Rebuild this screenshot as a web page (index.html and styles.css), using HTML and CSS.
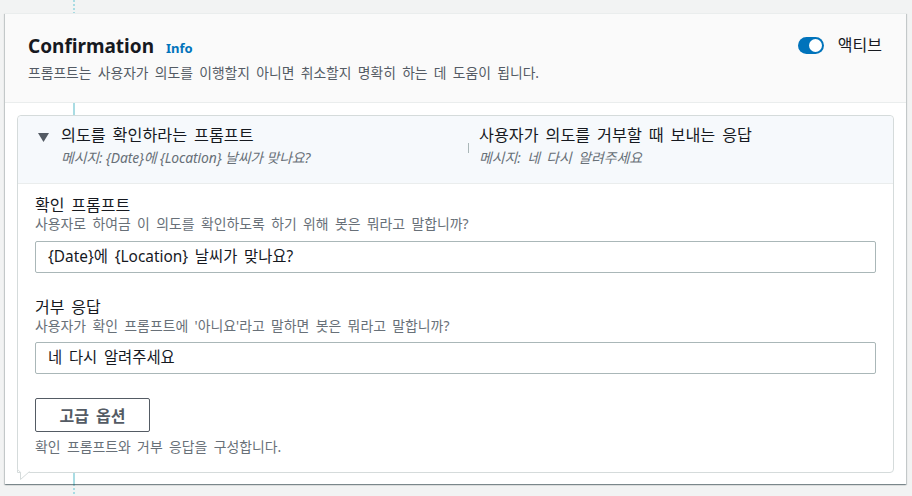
FILE: index.html
```html
<!DOCTYPE html>
<html lang="ko">
<head>
<meta charset="utf-8">
<title>Confirmation</title>
<link rel="stylesheet" href="styles.css">
</head>
<body>
<div class="page">
  <div class="connector"></div>
  <section class="card">
    <header class="card-head">
      <div class="head-text">
        <h2 class="title">Confirmation<a class="info" href="#">Info</a></h2>
        <p class="desc">프롬프트는 사용자가 의도를 이행할지 아니면 취소할지 명확히 하는 데 도움이 됩니다.</p>
      </div>
      <div class="toggle-wrap">
        <span class="toggle"><span class="knob"></span></span>
        <span class="toggle-label">액티브</span>
      </div>
    </header>
    <div class="card-body">
      <div class="line-solid"></div>
      <div class="exp">
        <div class="exp-head">
          <div class="col col-left">
            <svg class="caret" width="11" height="9" viewBox="0 0 11 9"><path d="M0 0 H11 L5.5 9 Z" fill="#545b64"/></svg>
            <div class="col-text">
              <div class="exp-title">의도를 확인하라는 프롬프트</div>
              <div class="exp-sub exp-sub-latin">메시지: {Date}에 {Location} 날씨가 맞나요?</div>
            </div>
          </div>
          <div class="col col-right">
            <span class="divider"></span>
            <div class="col-text">
              <div class="exp-title">사용자가 의도를 거부할 때 보내는 응답</div>
              <div class="exp-sub">메시지: 네 다시 알려주세요</div>
            </div>
          </div>
        </div>
        <div class="exp-body">
          <div class="field">
            <div class="field-label">확인 프롬프트</div>
            <div class="field-desc">사용자로 하여금 이 의도를 확인하도록 하기 위해 봇은 뭐라고 말합니까?</div>
            <div class="input">{Date}에 {Location} 날씨가 맞나요?</div>
          </div>
          <div class="field field-second">
            <div class="field-label">거부 응답</div>
            <div class="field-desc">사용자가 확인 프롬프트에 '아니요'라고 말하면 봇은 뭐라고 말합니까?</div>
            <div class="input">네 다시 알려주세요</div>
          </div>
          <button class="btn" type="button">고급 옵션</button>
          <p class="help">확인 프롬프트와 거부 응답을 구성합니다.</p>
        </div>
        <svg class="tail" width="16" height="14" viewBox="0 0 16 14">
          <path d="M0 0 V2 L4 6 V13 L13 4.5 H16 V0 Z" fill="#fff"/>
          <path d="M0.5 0 V2.3 L3.5 5.3 V12.5 L12.5 4.5" fill="none" stroke="#d5dbdb" stroke-width="1"/>
        </svg>
      </div>
    </div>
  </section>
</div>
</body>
</html>
```
FILE: styles.css
```css
* { box-sizing: border-box; }
html, body { margin: 0; padding: 0; }
body {
  background: #f2f3f3;
  font-family: "Noto Sans", "Noto Sans CJK KR", sans-serif;
  color: #16191f;
  width: 912px;
  height: 496px;
  overflow: hidden;
  word-spacing: 0.17em;
}
.page {
  position: relative;
  padding: 13px 6px 12px 5px;
  height: 496px;
}
.connector {
  position: absolute;
  left: 73px;
  top: 0;
  width: 2px;
  height: 100%;
  background: repeating-linear-gradient(to bottom, #a9dce3 0 2px, transparent 2px 4px);
}
.card {
  position: relative;
  z-index: 1;
  background: #fff;
  border-top: 1px solid #eaeded;
  box-shadow: 0 1px 1px 0 rgba(0,28,36,.3), 1px 1px 1px 0 rgba(0,28,36,.15), -1px 1px 1px 0 rgba(0,28,36,.15);
}
.card-head {
  display: flex;
  justify-content: space-between;
  align-items: flex-start;
  height: 89px;
  padding: 20px 24px 0 23px;
  background: #fafafa;
  border-bottom: 1px solid #eaeded;
}
.title {
  margin: 0;
  font-size: 19px;
  line-height: 24px;
  font-weight: 700;
  color: #16191f;
  word-spacing: 0;
}
.info {
  margin-left: 12px;
  font-size: 13px;
  font-weight: 700;
  color: #0073bb;
  text-decoration: none;
}
.desc {
  margin: 3px 0 0;
  font-size: 13.8px;
  line-height: 20px;
  color: #545b64;
}
.toggle-wrap {
  display: flex;
  align-items: center;
  gap: 14px;
  margin-top: 1px;
}
.toggle {
  display: inline-flex;
  align-items: center;
  justify-content: flex-end;
  width: 26px;
  height: 17px;
  padding: 0 2px;
  border-radius: 9px;
  background: #0073bb;
}
.knob {
  width: 13px;
  height: 13px;
  border-radius: 50%;
  background: #fff;
}
.toggle-label {
  font-size: 16px;
  line-height: 20px;
  color: #16191f;
}
.card-body {
  position: relative;
  padding: 12px 12px 11px 12px;
}
.line-solid {
  position: absolute;
  left: 68px;
  top: 0;
  bottom: 0;
  width: 2px;
  background: #a9dce3;
}
.exp {
  position: relative;
  z-index: 1;
  background: #fff;
  border: 1px solid #d5dbdb;
  border-radius: 4px 4px 4px 0;
}
.exp-head {
  display: grid;
  grid-template-columns: 430px 1fr;
  height: 68px;
  padding: 8px 20px 0 20px;
  background: #f6f9fc;
  border-bottom: 1px solid #eaeded;
  border-radius: 4px 4px 0 0;
}
.col { display: flex; align-items: flex-start; }
.caret { margin-top: 9px; margin-right: 12px; flex: none; }
.divider {
  width: 1px;
  height: 10px;
  background: #aab7b8;
  margin: 19px 10px 0 0;
  flex: none;
}
.exp-title {
  font-size: 16.2px;
  line-height: 22px;
  color: #16191f;
}
.exp-sub {
  font-size: 13.9px;
  line-height: 20px;
  font-style: italic;
  color: #687078;
  margin-top: 2px;
}
.exp-sub-latin { word-spacing: 0; letter-spacing: -0.1px; }
.exp-body {
  padding: 12px 17px 16px 17px;
}
.field { margin-bottom: 25px; }
.field-second { margin-bottom: 24px; }
.field-second .input { margin-top: 8px; }
.field-label {
  font-size: 16px;
  line-height: 19px;
  color: #16191f;
}
.field-desc {
  font-size: 13.9px;
  line-height: 17px;
  color: #687078;
}
.input {
  margin-top: 9px;
  height: 32px;
  padding: 0 12px;
  border: 1px solid #aab7b8;
  border-radius: 2px;
  font-size: 15.4px;
  line-height: 30px;
  color: #16191f;
  background: #fff;
}
.btn {
  display: block;
  width: 115px;
  height: 34px;
  margin: 0;
  padding: 0;
  border: 1px solid #545b64;
  border-radius: 2px;
  background: #fff;
  font-family: inherit;
  font-size: 16px;
  font-weight: 700;
  word-spacing: 0.17em;
  color: #545b64;
}
.help {
  margin: 6px 0 0;
  font-size: 13.9px;
  line-height: 18px;
  color: #687078;
}
.tail {
  position: absolute;
  left: -1px;
  bottom: -9px;
}
```
